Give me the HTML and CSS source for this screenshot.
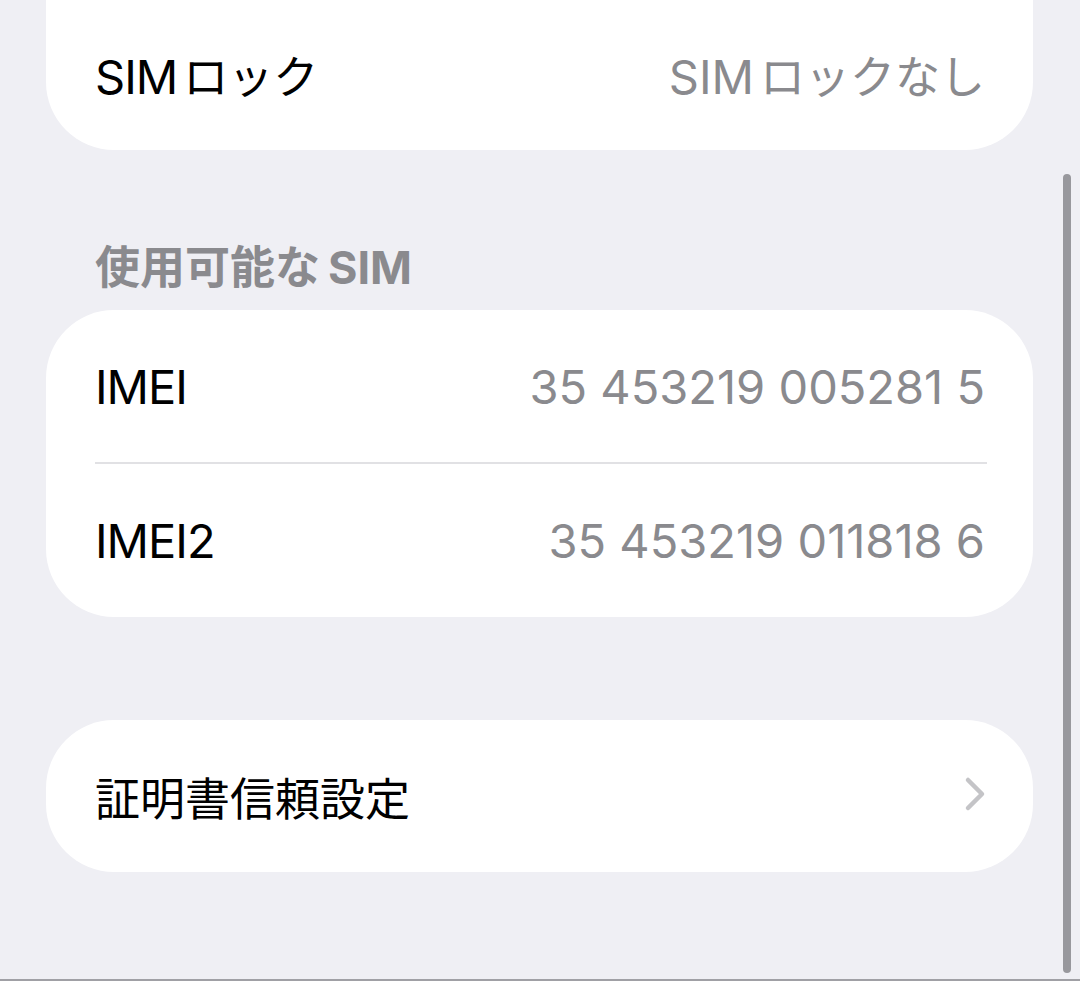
FILE: index.html
```html
<html>
  <head>
    <meta charset="UTF-8">
    <meta name="viewport" content="width=device-width,initial-scale=1">
    <title>情報</title>
    <link rel="stylesheet" href="styles.css">
  </head>
  <body>
    <div class="screen">
      <div class="group group-top">
        <div class="row">
          <p class="label">SIM<span class="ja gap">ロック</span></p>
          <p class="value">SIM<span class="ja gap">ロックなし</span></p>
        </div>
      </div>

      <p class="section-title"><span class="ja">使用可能な</span>SIM</p>
      <div class="group">
        <div class="row">
          <p class="label">IMEI</p>
          <p class="value">35 453219 005281 5</p>
        </div>
        <div class="row">
          <p class="label">IMEI2</p>
          <p class="value">35 453219 011818 6</p>
        </div>
      </div>

      <div class="group group-link">
        <div class="row">
          <p class="label"><span class="ja">証明書信頼設定</span></p>
          <svg class="chevron" width="24" height="36" viewBox="0 0 24 36">
            <path d="M5 4 L19 18 L5 32" fill="none" stroke="#c4c4c7" stroke-width="4.5" stroke-linecap="round" stroke-linejoin="round"/>
          </svg>
        </div>
      </div>
    </div>
    <div class="scroll-thumb"></div>
  </body>
</html>
```

FILE: styles.css
```css
body {
  margin: 0;
  width: 1080px;
  height: 981px;
  overflow: hidden;
  background-color: #efeff4;
  font-family: "Inter", "Noto Sans CJK JP", sans-serif;
}
p {
  margin: 0;
}
.screen {
  height: 979px;
  border-bottom: 2px solid #a0a0a5;
  padding: 0 47px 0 46px;
  display: flex;
  flex-direction: column;
}
.group {
  background-color: #ffffff;
  border-radius: 68px;
  padding: 0 46px 0 49px;
}
.group-top {
  margin-top: -2px;
  border-radius: 0 0 68px 68px;
}
.group-link {
  margin-top: 103px;
}
.row {
  height: 152px;
  display: flex;
  align-items: center;
  justify-content: space-between;
}
.row + .row {
  border-top: 2px solid #e1e1e4;
  height: 153px;
}
.label {
  font-size: 47px;
  letter-spacing: -1px;
  color: #000000;
}
.value {
  font-size: 47px;
  color: #8a8a8e;
  margin-right: 2px;
}
.ja {
  font-family: "Noto Sans CJK JP", sans-serif;
  font-size: 45px;
  letter-spacing: 0;
}
.gap {
  margin-left: 6px;
}
.section-title {
  height: 160px;
  box-sizing: border-box;
  padding: 88px 0 0 49px;
  font-size: 45px;
  font-weight: 700;
  line-height: 1.2;
  color: #8a8a8e;
}
.section-title .ja {
  margin-right: 8px;
}
.chevron {
  display: block;
  margin-top: -4px;
}
.scroll-thumb {
  position: absolute;
  left: 1063px;
  top: 174px;
  width: 8px;
  height: 799px;
  border-radius: 4px;
  background-color: #98989d;
}
```
